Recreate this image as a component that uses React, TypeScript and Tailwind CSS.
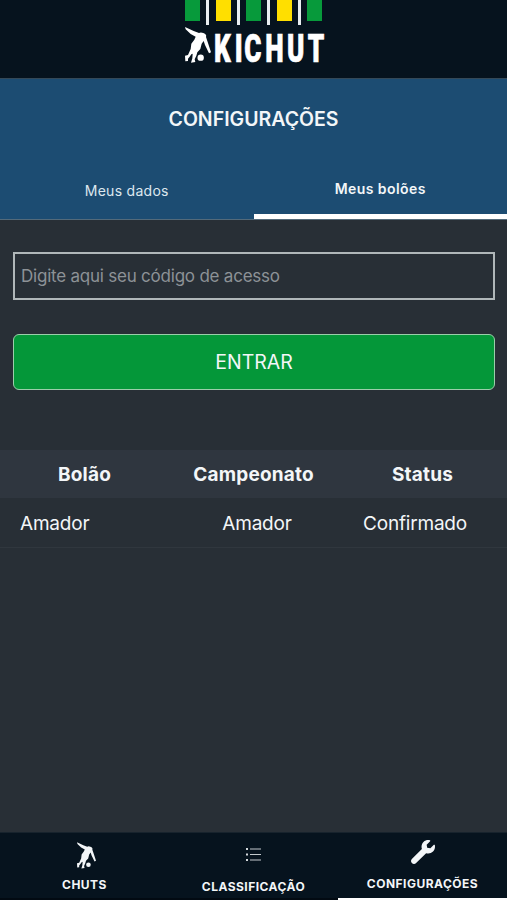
import type { ReactNode } from 'react';

interface Pool {
  name: string;
  championship: string;
  status: string;
}

const POOLS: Pool[] = [
  { name: 'Amador', championship: 'Amador', status: 'Confirmado' },
];

function PlayerIcon({ className }: { className?: string }) {
  return (
    <svg viewBox="0 0 78 108" className={className} fill="currentColor" aria-hidden="true">
      <path d="M0 0 L26 12 L42 18 Q47 15 55 18 Q66 22 63 30 L69 48 L78 76 L72 79 L60 54 L56 42 L50 50 L46 66 L37 76 L34 86 L29 97 L31 105 L18 107 L22 94 L23 80 L19 82 L14 89 L9 95 L9 102 L1 103 L0 86 L9 84 L17 66 L19 50 L28 38 L32 29 L17 21 L2 7 Z" />
      <circle cx="47" cy="92" r="9.5" />
    </svg>
  );
}

function ListIcon() {
  return (
    <svg viewBox="0 0 15 13" className="h-[13px] w-[15px]" aria-hidden="true">
      <path d="M0 1h2M0 6.5h2M0 12h2" stroke="#d3d8db" strokeWidth="1.8" />
      <path d="M4 1h11M4 6.5h11M4 12h11" stroke="#c3c9cd" strokeWidth="1" />
    </svg>
  );
}

function WrenchIcon() {
  return (
    <svg viewBox="0 0 512 512" className="h-6 w-6" fill="currentColor" aria-hidden="true">
      <path d="M507.73 109.1c-2.24-9.03-13.54-12.09-20.12-5.51l-74.36 74.36-67.88-11.31-11.31-67.88 74.36-74.36c6.62-6.62 3.43-17.9-5.66-20.16-47.38-11.74-99.55.91-136.58 37.93-39.64 39.64-50.55 97.1-34.05 147.2L18.74 402.76c-24.99 24.99-24.99 65.51 0 90.5 24.99 24.99 65.51 24.99 90.5 0l213.21-213.21c50.12 16.71 107.47 5.68 147.37-34.22 37.07-37.07 49.7-89.32 37.91-136.73z" />
    </svg>
  );
}

function Logo() {
  return (
    <div className="flex w-[140px] flex-col">
      <div className="flex h-[25px] items-start justify-between pr-[3px]">
        <i className="h-[21px] w-[15px] bg-[#079a3b]" />
        <i className="h-[25px] w-[3px] bg-[#e9eef1]" />
        <i className="h-[21px] w-[15px] bg-[#ffdf00]" />
        <i className="h-[25px] w-[3px] bg-[#e9eef1]" />
        <i className="h-[21px] w-[15px] bg-[#079a3b]" />
        <i className="h-[25px] w-[3px] bg-[#e9eef1]" />
        <i className="h-[21px] w-[15px] bg-[#ffdf00]" />
        <i className="h-[25px] w-[3px] bg-[#e9eef1]" />
        <i className="h-[21px] w-[15px] bg-[#079a3b]" />
      </div>
      <div className="flex pt-[2px]">
        <PlayerIcon className="h-[36px] w-[26px] shrink-0" />
        <svg viewBox="0 0 118 48" className="-mr-2 ml-[2px] h-12 w-[118px] shrink-0" fill="currentColor">
          <g
            transform="scale(0.68 1)"
            stroke="currentColor"
            strokeWidth="0.7"
            className="font-['Roboto',sans-serif] text-[38.5px] font-black"
          >
            <text x="1.5 32 46 77 109 139.5" y="34.5">
              KICHUT
            </text>
          </g>
        </svg>
      </div>
    </div>
  );
}

function NavItem({ children, active = false }: { children: ReactNode; active?: boolean }) {
  return (
    <button
      type="button"
      className={`flex h-full flex-1 flex-col items-center border-b-2 text-[12px] leading-4 font-bold tracking-[0.04em] ${
        active ? 'border-white' : 'border-[#020a12]'
      }`}
    >
      {children}
    </button>
  );
}

export default function App() {
  return (
    <div className="flex h-[900px] w-[507px] flex-col overflow-hidden bg-[#282f36] font-['Inter',sans-serif] text-[#f3f6f8]">
      <header className="flex h-[79px] shrink-0 justify-center border-b border-[#344958] bg-[#06131e] pl-[3px] text-white">
        <Logo />
      </header>

      <section className="flex h-[141px] shrink-0 flex-col border-b border-[#536a7a] bg-[#1c4c72]">
        <h1 className="pt-[26px] text-center text-[19.5px] leading-7 font-semibold">CONFIGURAÇÕES</h1>
        <div className="mt-auto flex h-[60px] text-[14px] leading-5">
          <button type="button" className="flex-1 pt-[3px] tracking-[0.02em] text-[#dce7ee]">
            Meus dados
          </button>
          <button type="button" className="flex-1 border-b-[5px] border-white pt-[5px] font-semibold tracking-[0.03em]">
            Meus bolões
          </button>
        </div>
      </section>

      <main className="flex-1">
        <div className="pt-8 pr-3 pl-[13px]">
          <input
            type="text"
            placeholder="Digite aqui seu código de acesso"
            className="block h-12 w-full border-2 border-[#b0b7b9] px-1.5 text-[17px] tracking-[-0.013em] placeholder:text-[#8d9296]"
          />
          <button
            type="button"
            className="mt-[34px] block h-14 w-full rounded-md border border-[#9bceaa] bg-[#049739] pt-0.5 text-[19.5px]"
          >
            ENTRAR
          </button>
        </div>

        <table className="mt-[60px] w-full table-fixed text-[19px] leading-6">
          <thead className="tracking-[0.01em]">
            <tr className="h-12 bg-[#2f363f]">
              <th className="pt-0.5 font-bold">Bolão</th>
              <th className="pt-0.5 font-bold">Campeonato</th>
              <th className="pt-0.5 font-bold">Status</th>
            </tr>
          </thead>
          <tbody className="tracking-[-0.01em]">
            {POOLS.map((pool) => (
              <tr key={pool.name} className="h-[49px] border-b border-[#30373e]">
                <td className="pt-[3px] pl-5">{pool.name}</td>
                <td className="pt-[3px] pl-[7px] text-center">{pool.championship}</td>
                <td className="pt-[3px] pr-[15px] text-center">{pool.status}</td>
              </tr>
            ))}
          </tbody>
        </table>
      </main>

      <nav className="flex h-[68px] shrink-0 border-t border-[#17232d] bg-[#06131e]">
        <NavItem>
          <PlayerIcon className="mt-[9px] ml-1 h-[27px] w-[19px]" />
          <span className="mt-2">CHUTS</span>
        </NavItem>
        <NavItem>
          <span className="mt-[15px]">
            <ListIcon />
          </span>
          <span className="mt-[18px]">CLASSIFICAÇÃO</span>
        </NavItem>
        <NavItem active>
          <span className="mt-[7px]">
            <WrenchIcon />
          </span>
          <span className="mt-3">CONFIGURAÇÕES</span>
        </NavItem>
      </nav>
    </div>
  );
}
